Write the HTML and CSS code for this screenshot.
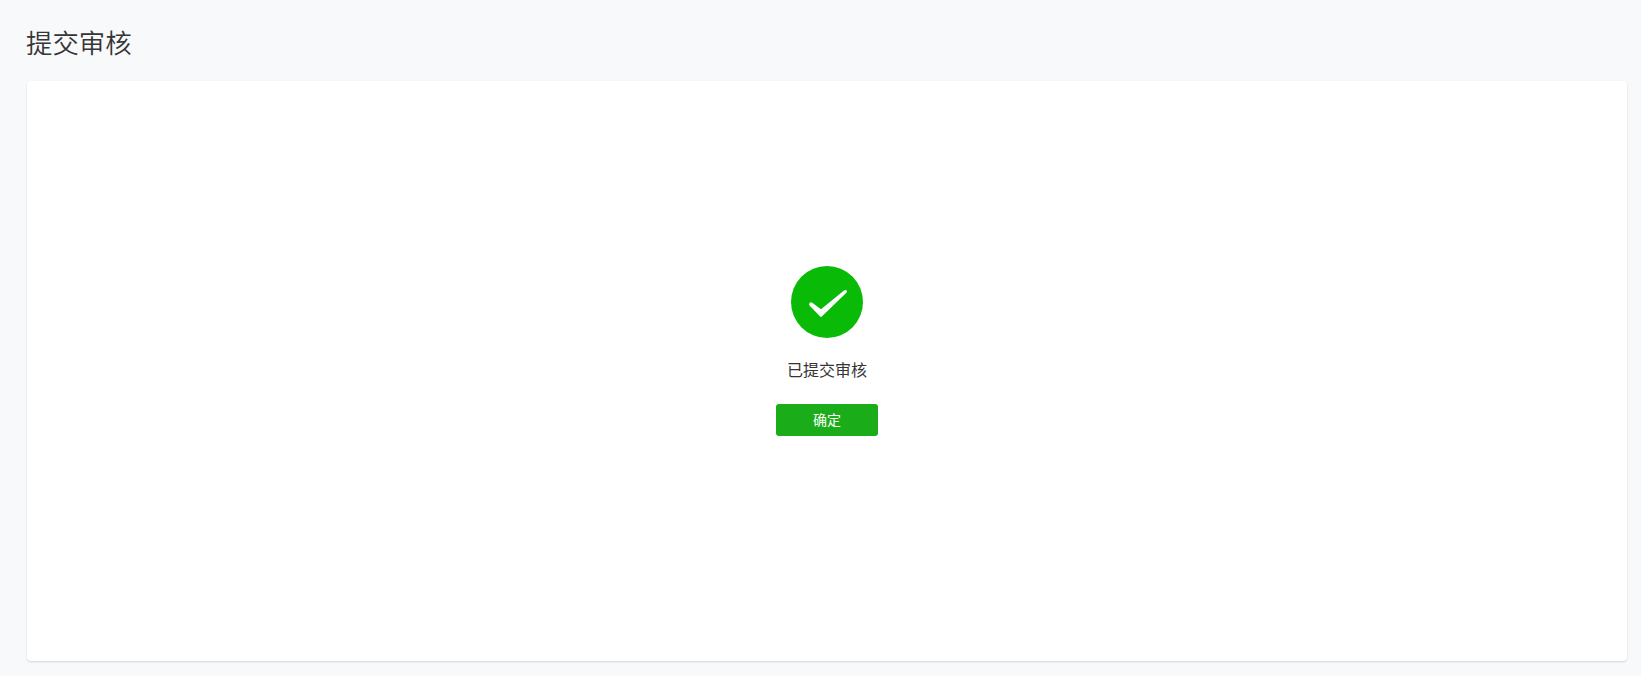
FILE: index.html
```html
<!DOCTYPE html>
<html lang="zh-CN">
<head>
    <meta charset="UTF-8">
    <meta name="viewport" content="width=device-width, initial-scale=1.0">
    <title>提交审核</title>
    <link rel="stylesheet" href="styles.css">
</head>
<body>
    <div class="page">
        <h2 class="page-title">提交审核</h2>

        <div class="panel">
            <svg class="icon-success" viewBox="0 0 72 72" width="72" height="72">
                <circle cx="36" cy="36" r="36" fill="#09bb07"/>
                <path fill="#fff" d="M18.5 39.6Q17.6 38 18.6 36.9Q19.8 35.8 21.3 36.8L30 43.2L53 24.5Q54.7 23.3 55.7 24.5Q56.5 25.6 55.4 26.8L30.8 50.6Q30 51.4 29.2 50.6Z"/>
            </svg>
            <p class="message">已提交审核</p>
            <button class="btn" type="button">确定</button>
        </div>
    </div>
</body>
</html>
```

FILE: styles.css
```css
body {
    margin: 0;
    background-color: #f8f9fb;
    color: #353535;
    font-family: "Noto Sans CJK SC", sans-serif;
}
.page {
    box-sizing: border-box;
    height: 676px;
    padding: 23px 14px 15px 26px;
}
.page-title {
    margin: 0 0 20px;
    font-size: 26.4px;
    font-weight: 350;
    line-height: 38px;
}
.panel {
    display: flex;
    flex-direction: column;
    align-items: center;
    box-sizing: border-box;
    height: 580px;
    margin-left: 1px;
    padding-top: 185px;
    background: #fff;
    border-radius: 4px;
    box-shadow: 0 1px 2px rgba(0, 0, 0, 0.15);
}
.icon-success {
    display: block;
}
.message {
    margin: 19px 0 22px;
    font-size: 16px;
    line-height: 25px;
}
.btn {
    width: 102px;
    height: 32px;
    padding: 0 0 2px;
    border: none;
    border-radius: 3px;
    background-color: #1aad19;
    color: #fff;
    font-family: inherit;
    font-size: 14px;
    line-height: 30px;
    cursor: pointer;
}
```
